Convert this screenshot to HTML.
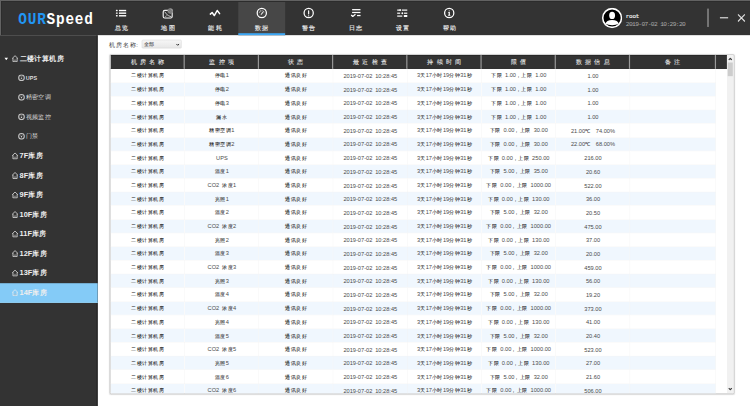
<!DOCTYPE html>
<html><head><meta charset="utf-8">
<style>
*{margin:0;padding:0;box-sizing:border-box}
html,body{width:750px;height:406px;overflow:hidden;background:#fff}
body{font-family:"Liberation Sans",sans-serif;position:relative}
#s{position:absolute;left:0;top:0;width:1920px;height:1040px;transform:scale(0.390625);transform-origin:0 0;background:#fff;overflow:hidden}
#hdr{position:absolute;left:0;top:0;width:1920px;height:90px;background:#333}
#logo{position:absolute;left:47px;top:27px;font-family:"Liberation Mono",monospace;font-size:40px;line-height:48px;color:#fff;font-weight:bold;letter-spacing:2.2px;transform:scaleX(0.92);transform-origin:0 0}
#logo b{color:#2196f3;-webkit-text-stroke:0px}
.nav{position:absolute;top:0;width:120px;height:90px;color:#eee;text-align:center}
.nav.act{background:#474747}
.nav.act:after{content:"";position:absolute;left:0;right:0;bottom:0;height:5px;background:#3da8f5}
.nav svg{position:absolute;left:44px;top:16px;width:32px;height:32px}
.nav span{position:absolute;left:0;right:0;top:64px;font-size:15px;line-height:18px;letter-spacing:3.5px;text-indent:3.5px;-webkit-text-stroke:0.35px #eee}
#side{position:absolute;left:0;top:90px;width:250px;height:950px;background:#333;box-shadow:inset -3px 0 0 #262626}
.si{position:absolute;left:0;width:250px;height:50px;color:#eee}
.si.act{background:#84cbf7;box-shadow:inset 0 -2px 0 #98d8fb}
.si .t{position:absolute;top:15px;font-size:19px;line-height:21px;font-weight:bold}
.si .sub{position:absolute;left:66px;top:15px;font-size:16px;line-height:18px;color:#ddd}
#content{position:absolute;left:250px;top:90px;width:1670px;height:950px;background:#fff}
#lbl{position:absolute;left:280px;top:106px;font-size:15px;line-height:18px;color:#3a3a3a;letter-spacing:2.2px}
#sel{position:absolute;left:363px;top:102px;width:102px;height:22px;border:1px solid #c8c8c8;border-radius:3px;background:linear-gradient(#f6f6f6,#e6e6e6);font-size:14px;line-height:20px;padding-left:4px;color:#111}
#grid{position:absolute;left:281px;top:139px;width:1599px;height:870px;border:2px solid #c2c2c2;border-radius:4px;overflow:hidden;background:#fff;box-shadow:0 1px 3px rgba(0,0,0,.12)}
#gh{position:absolute;left:0;top:0;height:35px;width:1578px;background:#333;border-top:2px solid #222;border-bottom:2px solid #222}
#gh div{position:absolute;top:0;height:31px;line-height:31px;text-align:center;color:#e8e8e8;font-size:15px;letter-spacing:8.8px;text-indent:8.8px;-webkit-text-stroke:0.2px #eee}
#gh i{position:absolute;top:-2px;width:3px;height:35px;background:#9a9a9a}
#gb{position:absolute;left:0;top:35px;width:1580px}
table{border-collapse:collapse;table-layout:fixed}
td{height:35px;padding:2px 0 0 2px;text-align:center;font-size:13.5px;color:#1a1a1a;-webkit-text-stroke:0.15px #1a1a1a;border-right:1px solid #f2f2f2;border-bottom:1px solid #f4f4f4;white-space:nowrap;overflow:hidden}
tr.alt td{background:#f0f7fe}
td .a{font-family:"Liberation Sans",sans-serif;font-size:14.5px;letter-spacing:0px;-webkit-text-stroke:0;color:#4a4a4a}
#sb{position:absolute;left:1578px;top:0;width:17px;height:865px;background:#f1f1f1}
#thumb{position:absolute;left:2px;top:19px;width:13px;height:35px;background:#cdcdcd}
</style></head><body>
<div id="s">
 <div id="hdr">
  <div id="logo"><b>OUR</b>Speed</div>
  <div class="nav" style="left:250px"><svg viewBox="0 0 32 32"><g fill="#fff"><rect x="2.7" y="9.2" width="4.6" height="3.6" rx="1"/><rect x="10.6" y="9.2" width="18.4" height="3.6"/><rect x="2.7" y="15.9" width="4.6" height="3.6" rx="1"/><rect x="10.6" y="15.9" width="18.4" height="3.6"/><rect x="2.7" y="22.6" width="4.6" height="3.6" rx="1"/><rect x="10.6" y="22.6" width="18.4" height="3.6"/></g></svg><span>总览</span></div>
  <div class="nav" style="left:370px"><svg viewBox="0 0 32 32"><rect x="3.8" y="10.6" width="23" height="19.8" rx="4" fill="none" stroke="#eee" stroke-width="3"/><circle cx="22" cy="12" r="7" fill="#999"/><path d="M17 7 L27 17 M16 10 L24 18 M19 6 L27 14 M15 13 L21 19" stroke="#444" stroke-width="1.2"/><path d="M7.5 14 L14 22 L18 24.5 L25 27" stroke="#ddd" stroke-width="2.2" fill="none"/><path d="M8 27 L13 24" stroke="#bbb" stroke-width="1.8"/></svg><span>地图</span></div>
  <div class="nav" style="left:490px"><svg viewBox="0 0 32 32"><path d="M4.4 20.1 L9 16 L14.6 23.9 L22 10.9 L28.2 18.8" stroke="#fff" stroke-width="3.8" fill="none" stroke-linejoin="round" stroke-linecap="round"/></svg><span>能耗</span></div>
  <div class="nav act" style="left:610px"><svg viewBox="0 0 32 32"><circle cx="16.2" cy="17.3" r="11.8" fill="none" stroke="#fff" stroke-width="3.2"/><path d="M9.8 16.5 A6.6 6.6 0 0 1 22.6 16.5" stroke="#c8c8c8" stroke-width="2.6" fill="none" stroke-dasharray="2.4 1.5"/><path d="M14.8 20.5 L18.8 15.5" stroke="#e0e0e0" stroke-width="3" stroke-linecap="round"/></svg><span>数据</span></div>
  <div class="nav" style="left:730px"><svg viewBox="0 0 32 32"><circle cx="16.2" cy="17.3" r="11.8" fill="none" stroke="#fff" stroke-width="3.2"/><rect x="14.6" y="10.5" width="3" height="10.5" rx="1.2" fill="#fff"/><circle cx="16.1" cy="24.6" r="1.6" fill="#fff"/></svg><span>警告</span></div>
  <div class="nav" style="left:850px"><svg viewBox="0 0 32 32"><g fill="#fff"><rect x="7.4" y="7.2" width="21.4" height="3.2"/><rect x="7.4" y="14.4" width="21.4" height="3.2"/><rect x="20" y="22.2" width="9" height="3.2"/></g><path d="M5 22.5 L9 26 L16 20.5" stroke="#fff" stroke-width="3.2" fill="none" stroke-linejoin="round"/></svg><span>日志</span></div>
  <div class="nav" style="left:970px"><svg viewBox="0 0 32 32"><g fill="#fff"><rect x="2.8" y="8.4" width="9" height="3"/><path d="M6.5 9.9 L12 7 L12 12.8Z"/><rect x="14.6" y="8.4" width="14" height="3"/><rect x="2.8" y="16.3" width="7.6" height="3"/><circle cx="15.9" cy="17.8" r="2.4"/><rect x="20.3" y="16.3" width="8.4" height="3"/><rect x="2.8" y="23.7" width="13" height="3"/><rect x="19.8" y="22.3" width="8.9" height="5.2" rx="1.5"/></g></svg><span>设置</span></div>
  <div class="nav" style="left:1090px"><svg viewBox="0 0 32 32"><circle cx="16" cy="17.3" r="11.8" fill="none" stroke="#fff" stroke-width="3.2"/><circle cx="16" cy="11.8" r="1.7" fill="#ccc"/><path d="M13.6 15 L17.6 15 L17.6 21 L19.5 24 L12.5 24 L14.5 21 L14.5 17 L13.6 17Z" fill="#fff"/></svg><span>帮助</span></div>
  <svg style="position:absolute;left:1541px;top:20px" width="52" height="52" viewBox="0 0 52 52"><circle cx="26" cy="26" r="24" fill="#000" stroke="#fff" stroke-width="4"/><ellipse cx="26" cy="19.5" rx="7.5" ry="9.3" fill="#fff"/><path d="M9 41 Q11 31 26 31 Q41 31 43 41 Q36 44.5 26 44.5 Q16 44.5 9 41Z" fill="#fff"/></svg>
  <div style="position:absolute;left:1602px;top:35px;font-family:'Liberation Mono',monospace;font-size:15px;color:#e8e8e8;-webkit-text-stroke:0.5px #e8e8e8;letter-spacing:-0.5px">root</div>
  <div style="position:absolute;left:1602px;top:54px;font-family:'Liberation Mono',monospace;font-size:16px;letter-spacing:-1.6px;color:#a8a8a8">2019-07-02 10:29:20</div>
  <div style="position:absolute;left:1810px;top:22px;width:5px;height:47px;background:#777"></div>
  <div style="position:absolute;left:1843px;top:44px;width:21px;height:3px;background:#ddd"></div>
  <svg style="position:absolute;left:1888px;top:36px" width="20" height="20" viewBox="0 0 20 20"><path d="M1 1 L19 19 M19 1 L1 19" stroke="#ddd" stroke-width="3"/></svg>
 </div>
 <div id="side">
  <div class="si" style="top:35px"><svg style="position:absolute;left:11px;top:22px" width="10" height="7" viewBox="0 0 10 7"><path d="M0 0 L10 0 L5 7Z" fill="#fff"/></svg><svg style="position:absolute;left:30px;top:16px" width="17" height="18" viewBox="0 0 17 18"><path d="M1.2 8.6 L8.5 1.6 L15.8 8.6 M3.2 7.5 V16.9 H13.8 V7.5" stroke="#eee" stroke-width="1.9" fill="none" stroke-linejoin="round"/><path d="M6.8 16.5 V12.5 Q8.5 9.5 10.2 12.5 V16.5" stroke="#bbb" stroke-width="1.3" fill="none"/></svg><span class="t" style="left:50px">二楼计算机房</span></div>
  <div class="si" style="top:85px"><svg class="ci" style="position:absolute;left:46px;top:15px" width="18" height="18" viewBox="0 0 18 18"><circle cx="9" cy="9" r="7.2" fill="none" stroke="#c4c4c4" stroke-width="2.8"/><path d="M5 8 A4.5 4.5 0 0 1 13 8" stroke="#888" stroke-width="1.5" fill="none"/><circle cx="9" cy="10" r="1.8" fill="#ddd"/></svg><span class="sub" style="font-size:14px;top:16px;font-weight:bold">UPS</span></div>
  <div class="si" style="top:135px"><svg style="position:absolute;left:46px;top:15px" width="18" height="18" viewBox="0 0 18 18"><circle cx="9" cy="9" r="7.2" fill="none" stroke="#c4c4c4" stroke-width="2.8"/><path d="M5 8 A4.5 4.5 0 0 1 13 8" stroke="#888" stroke-width="1.5" fill="none"/><circle cx="9" cy="10" r="1.8" fill="#ddd"/></svg><span class="sub">精密空调</span></div>
  <div class="si" style="top:185px"><svg style="position:absolute;left:46px;top:15px" width="18" height="18" viewBox="0 0 18 18"><circle cx="9" cy="9" r="7.2" fill="none" stroke="#c4c4c4" stroke-width="2.8"/><path d="M5 8 A4.5 4.5 0 0 1 13 8" stroke="#888" stroke-width="1.5" fill="none"/><circle cx="9" cy="10" r="1.8" fill="#ddd"/></svg><span class="sub">视频监控</span></div>
  <div class="si" style="top:235px"><svg style="position:absolute;left:46px;top:15px" width="18" height="18" viewBox="0 0 18 18"><circle cx="9" cy="9" r="7.2" fill="none" stroke="#c4c4c4" stroke-width="2.8"/><path d="M5 8 A4.5 4.5 0 0 1 13 8" stroke="#888" stroke-width="1.5" fill="none"/><circle cx="9" cy="10" r="1.8" fill="#ddd"/></svg><span class="sub">门禁</span></div>
  <div class="si" style="top:285px"><svg style="position:absolute;left:30px;top:15px" width="17" height="18" viewBox="0 0 17 18"><path d="M1.2 8.6 L8.5 1.6 L15.8 8.6 M3.2 7.5 V16.9 H13.8 V7.5" stroke="#eee" stroke-width="1.9" fill="none" stroke-linejoin="round"/><path d="M6.8 16.5 V12.5 Q8.5 9.5 10.2 12.5 V16.5" stroke="#bbb" stroke-width="1.3" fill="none"/></svg><span class="t" style="left:50px;top:13px">7F库房</span></div>
  <div class="si" style="top:335px"><svg style="position:absolute;left:30px;top:15px" width="17" height="18" viewBox="0 0 17 18"><path d="M1.2 8.6 L8.5 1.6 L15.8 8.6 M3.2 7.5 V16.9 H13.8 V7.5" stroke="#eee" stroke-width="1.9" fill="none" stroke-linejoin="round"/><path d="M6.8 16.5 V12.5 Q8.5 9.5 10.2 12.5 V16.5" stroke="#bbb" stroke-width="1.3" fill="none"/></svg><span class="t" style="left:50px;top:13px">8F库房</span></div>
  <div class="si" style="top:385px"><svg style="position:absolute;left:30px;top:15px" width="17" height="18" viewBox="0 0 17 18"><path d="M1.2 8.6 L8.5 1.6 L15.8 8.6 M3.2 7.5 V16.9 H13.8 V7.5" stroke="#eee" stroke-width="1.9" fill="none" stroke-linejoin="round"/><path d="M6.8 16.5 V12.5 Q8.5 9.5 10.2 12.5 V16.5" stroke="#bbb" stroke-width="1.3" fill="none"/></svg><span class="t" style="left:50px;top:13px">9F库房</span></div>
  <div class="si" style="top:435px"><svg style="position:absolute;left:30px;top:15px" width="17" height="18" viewBox="0 0 17 18"><path d="M1.2 8.6 L8.5 1.6 L15.8 8.6 M3.2 7.5 V16.9 H13.8 V7.5" stroke="#eee" stroke-width="1.9" fill="none" stroke-linejoin="round"/><path d="M6.8 16.5 V12.5 Q8.5 9.5 10.2 12.5 V16.5" stroke="#bbb" stroke-width="1.3" fill="none"/></svg><span class="t" style="left:50px;top:13px">10F库房</span></div>
  <div class="si" style="top:485px"><svg style="position:absolute;left:30px;top:15px" width="17" height="18" viewBox="0 0 17 18"><path d="M1.2 8.6 L8.5 1.6 L15.8 8.6 M3.2 7.5 V16.9 H13.8 V7.5" stroke="#eee" stroke-width="1.9" fill="none" stroke-linejoin="round"/><path d="M6.8 16.5 V12.5 Q8.5 9.5 10.2 12.5 V16.5" stroke="#bbb" stroke-width="1.3" fill="none"/></svg><span class="t" style="left:50px;top:13px">11F库房</span></div>
  <div class="si" style="top:535px"><svg style="position:absolute;left:30px;top:15px" width="17" height="18" viewBox="0 0 17 18"><path d="M1.2 8.6 L8.5 1.6 L15.8 8.6 M3.2 7.5 V16.9 H13.8 V7.5" stroke="#eee" stroke-width="1.9" fill="none" stroke-linejoin="round"/><path d="M6.8 16.5 V12.5 Q8.5 9.5 10.2 12.5 V16.5" stroke="#bbb" stroke-width="1.3" fill="none"/></svg><span class="t" style="left:50px;top:13px">12F库房</span></div>
  <div class="si" style="top:585px"><svg style="position:absolute;left:30px;top:15px" width="17" height="18" viewBox="0 0 17 18"><path d="M1.2 8.6 L8.5 1.6 L15.8 8.6 M3.2 7.5 V16.9 H13.8 V7.5" stroke="#eee" stroke-width="1.9" fill="none" stroke-linejoin="round"/><path d="M6.8 16.5 V12.5 Q8.5 9.5 10.2 12.5 V16.5" stroke="#bbb" stroke-width="1.3" fill="none"/></svg><span class="t" style="left:50px;top:13px">13F库房</span></div>
  <div class="si act" style="top:635px"><svg style="position:absolute;left:30px;top:15px" width="17" height="18" viewBox="0 0 17 18"><path d="M1.2 8.6 L8.5 1.6 L15.8 8.6 M3.2 7.5 V16.9 H13.8 V7.5" stroke="#eee" stroke-width="1.9" fill="none" stroke-linejoin="round"/><path d="M6.8 16.5 V12.5 Q8.5 9.5 10.2 12.5 V16.5" stroke="#bbb" stroke-width="1.3" fill="none"/></svg><span class="t" style="left:50px;top:13px">14F库房</span></div>
 </div>
 <div id="lbl">机房名称:</div>
 <div id="sel">全部<svg style="position:absolute;right:4px;top:8px" width="10" height="7" viewBox="0 0 10 7"><path d="M1.5 1.5 L5 5 L8.5 1.5" stroke="#222" stroke-width="2.4" fill="none"/></svg></div>
 <div id="grid">
  <div id="gh">
   <div style="left:0px;width:189px">机房名称</div>
   <i style="left:187px"></i>
   <div style="left:189px;width:190px">监控项</div>
   <i style="left:377px"></i>
   <div style="left:379px;width:190px">状态</div>
   <i style="left:567px"></i>
   <div style="left:569px;width:190px">最近检查</div>
   <i style="left:757px"></i>
   <div style="left:759px;width:190px">持续时间</div>
   <i style="left:947px"></i>
   <div style="left:949px;width:190px">限值</div>
   <i style="left:1137px"></i>
   <div style="left:1139px;width:190px">数据信息</div>
   <i style="left:1327px"></i>
   <div style="left:1329px;width:220px">备注</div>
   <i style="left:1547px"></i>
  </div>
  <div id="gb"><table>
   <colgroup><col style="width:189px"><col style="width:190px"><col style="width:190px"><col style="width:190px"><col style="width:190px"><col style="width:190px"><col style="width:190px"><col style="width:220px"></colgroup>
<tr><td>二楼计算机房</td><td>停电<span class="a">1</span></td><td>通讯良好</td><td><span class="a">2019-07-02 10:28:45</span></td><td><span class="a">3</span>天<span class="a">17</span>小时<span class="a">19</span>分钟<span class="a">31</span>秒</td><td>下限<span class="a"> 1.00</span>，上限<span class="a"> 1.00</span></td><td><span class="a">1.00</span></td><td></td></tr>
<tr class="alt"><td>二楼计算机房</td><td>停电<span class="a">2</span></td><td>通讯良好</td><td><span class="a">2019-07-02 10:28:45</span></td><td><span class="a">3</span>天<span class="a">17</span>小时<span class="a">19</span>分钟<span class="a">31</span>秒</td><td>下限<span class="a"> 1.00</span>，上限<span class="a"> 1.00</span></td><td><span class="a">1.00</span></td><td></td></tr>
<tr><td>二楼计算机房</td><td>停电<span class="a">3</span></td><td>通讯良好</td><td><span class="a">2019-07-02 10:28:45</span></td><td><span class="a">3</span>天<span class="a">17</span>小时<span class="a">19</span>分钟<span class="a">31</span>秒</td><td>下限<span class="a"> 1.00</span>，上限<span class="a"> 1.00</span></td><td><span class="a">1.00</span></td><td></td></tr>
<tr class="alt"><td>二楼计算机房</td><td>漏水</td><td>通讯良好</td><td><span class="a">2019-07-02 10:28:45</span></td><td><span class="a">3</span>天<span class="a">17</span>小时<span class="a">19</span>分钟<span class="a">31</span>秒</td><td>下限<span class="a"> 1.00</span>，上限<span class="a"> 1.00</span></td><td><span class="a">1.00</span></td><td></td></tr>
<tr><td>二楼计算机房</td><td>精密空调<span class="a">1</span></td><td>通讯良好</td><td><span class="a">2019-07-02 10:28:45</span></td><td><span class="a">3</span>天<span class="a">17</span>小时<span class="a">19</span>分钟<span class="a">31</span>秒</td><td>下限<span class="a"> 0.00</span>，上限<span class="a"> 30.00</span></td><td><span class="a">21.00</span>℃<span class="a">  74.00%</span></td><td></td></tr>
<tr class="alt"><td>二楼计算机房</td><td>精密空调<span class="a">2</span></td><td>通讯良好</td><td><span class="a">2019-07-02 10:28:45</span></td><td><span class="a">3</span>天<span class="a">17</span>小时<span class="a">19</span>分钟<span class="a">31</span>秒</td><td>下限<span class="a"> 0.00</span>，上限<span class="a"> 30.00</span></td><td><span class="a">22.00</span>℃<span class="a">  68.00%</span></td><td></td></tr>
<tr><td>二楼计算机房</td><td><span class="a">UPS</span></td><td>通讯良好</td><td><span class="a">2019-07-02 10:28:45</span></td><td><span class="a">3</span>天<span class="a">17</span>小时<span class="a">19</span>分钟<span class="a">31</span>秒</td><td>下限<span class="a"> 0.00</span>，上限<span class="a"> 250.00</span></td><td><span class="a">216.00</span></td><td></td></tr>
<tr class="alt"><td>二楼计算机房</td><td>温度<span class="a">1</span></td><td>通讯良好</td><td><span class="a">2019-07-02 10:28:45</span></td><td><span class="a">3</span>天<span class="a">17</span>小时<span class="a">19</span>分钟<span class="a">31</span>秒</td><td>下限<span class="a"> 5.00</span>，上限<span class="a"> 35.00</span></td><td><span class="a">20.60</span></td><td></td></tr>
<tr><td>二楼计算机房</td><td><span class="a">CO2 </span>浓度<span class="a">1</span></td><td>通讯良好</td><td><span class="a">2019-07-02 10:28:45</span></td><td><span class="a">3</span>天<span class="a">17</span>小时<span class="a">19</span>分钟<span class="a">31</span>秒</td><td>下限<span class="a"> 0.00</span>，上限<span class="a"> 1000.00</span></td><td><span class="a">522.00</span></td><td></td></tr>
<tr class="alt"><td>二楼计算机房</td><td>光照<span class="a">1</span></td><td>通讯良好</td><td><span class="a">2019-07-02 10:28:45</span></td><td><span class="a">3</span>天<span class="a">17</span>小时<span class="a">19</span>分钟<span class="a">31</span>秒</td><td>下限<span class="a"> 0.00</span>，上限<span class="a"> 130.00</span></td><td><span class="a">36.00</span></td><td></td></tr>
<tr><td>二楼计算机房</td><td>温度<span class="a">2</span></td><td>通讯良好</td><td><span class="a">2019-07-02 10:28:45</span></td><td><span class="a">3</span>天<span class="a">17</span>小时<span class="a">19</span>分钟<span class="a">31</span>秒</td><td>下限<span class="a"> 5.00</span>，上限<span class="a"> 32.00</span></td><td><span class="a">20.50</span></td><td></td></tr>
<tr class="alt"><td>二楼计算机房</td><td><span class="a">CO2 </span>浓度<span class="a">2</span></td><td>通讯良好</td><td><span class="a">2019-07-02 10:28:45</span></td><td><span class="a">3</span>天<span class="a">17</span>小时<span class="a">19</span>分钟<span class="a">31</span>秒</td><td>下限<span class="a"> 0.00</span>，上限<span class="a"> 1000.00</span></td><td><span class="a">475.00</span></td><td></td></tr>
<tr><td>二楼计算机房</td><td>光照<span class="a">2</span></td><td>通讯良好</td><td><span class="a">2019-07-02 10:28:45</span></td><td><span class="a">3</span>天<span class="a">17</span>小时<span class="a">19</span>分钟<span class="a">31</span>秒</td><td>下限<span class="a"> 0.00</span>，上限<span class="a"> 130.00</span></td><td><span class="a">37.00</span></td><td></td></tr>
<tr class="alt"><td>二楼计算机房</td><td>温度<span class="a">3</span></td><td>通讯良好</td><td><span class="a">2019-07-02 10:28:45</span></td><td><span class="a">3</span>天<span class="a">17</span>小时<span class="a">19</span>分钟<span class="a">31</span>秒</td><td>下限<span class="a"> 5.00</span>，上限<span class="a"> 32.00</span></td><td><span class="a">20.00</span></td><td></td></tr>
<tr><td>二楼计算机房</td><td><span class="a">CO2 </span>浓度<span class="a">3</span></td><td>通讯良好</td><td><span class="a">2019-07-02 10:28:45</span></td><td><span class="a">3</span>天<span class="a">17</span>小时<span class="a">19</span>分钟<span class="a">31</span>秒</td><td>下限<span class="a"> 0.00</span>，上限<span class="a"> 1000.00</span></td><td><span class="a">459.00</span></td><td></td></tr>
<tr class="alt"><td>二楼计算机房</td><td>光照<span class="a">3</span></td><td>通讯良好</td><td><span class="a">2019-07-02 10:28:45</span></td><td><span class="a">3</span>天<span class="a">17</span>小时<span class="a">19</span>分钟<span class="a">31</span>秒</td><td>下限<span class="a"> 0.00</span>，上限<span class="a"> 130.00</span></td><td><span class="a">56.00</span></td><td></td></tr>
<tr><td>二楼计算机房</td><td>温度<span class="a">4</span></td><td>通讯良好</td><td><span class="a">2019-07-02 10:28:45</span></td><td><span class="a">3</span>天<span class="a">17</span>小时<span class="a">19</span>分钟<span class="a">31</span>秒</td><td>下限<span class="a"> 5.00</span>，上限<span class="a"> 32.00</span></td><td><span class="a">19.20</span></td><td></td></tr>
<tr class="alt"><td>二楼计算机房</td><td><span class="a">CO2 </span>浓度<span class="a">4</span></td><td>通讯良好</td><td><span class="a">2019-07-02 10:28:45</span></td><td><span class="a">3</span>天<span class="a">17</span>小时<span class="a">19</span>分钟<span class="a">31</span>秒</td><td>下限<span class="a"> 0.00</span>，上限<span class="a"> 1000.00</span></td><td><span class="a">373.00</span></td><td></td></tr>
<tr><td>二楼计算机房</td><td>光照<span class="a">4</span></td><td>通讯良好</td><td><span class="a">2019-07-02 10:28:45</span></td><td><span class="a">3</span>天<span class="a">17</span>小时<span class="a">19</span>分钟<span class="a">31</span>秒</td><td>下限<span class="a"> 0.00</span>，上限<span class="a"> 130.00</span></td><td><span class="a">41.00</span></td><td></td></tr>
<tr class="alt"><td>二楼计算机房</td><td>温度<span class="a">5</span></td><td>通讯良好</td><td><span class="a">2019-07-02 10:28:45</span></td><td><span class="a">3</span>天<span class="a">17</span>小时<span class="a">19</span>分钟<span class="a">31</span>秒</td><td>下限<span class="a"> 5.00</span>，上限<span class="a"> 32.00</span></td><td><span class="a">20.40</span></td><td></td></tr>
<tr><td>二楼计算机房</td><td><span class="a">CO2 </span>浓度<span class="a">5</span></td><td>通讯良好</td><td><span class="a">2019-07-02 10:28:45</span></td><td><span class="a">3</span>天<span class="a">17</span>小时<span class="a">19</span>分钟<span class="a">31</span>秒</td><td>下限<span class="a"> 0.00</span>，上限<span class="a"> 1000.00</span></td><td><span class="a">523.00</span></td><td></td></tr>
<tr class="alt"><td>二楼计算机房</td><td>光照<span class="a">5</span></td><td>通讯良好</td><td><span class="a">2019-07-02 10:28:45</span></td><td><span class="a">3</span>天<span class="a">17</span>小时<span class="a">19</span>分钟<span class="a">31</span>秒</td><td>下限<span class="a"> 0.00</span>，上限<span class="a"> 130.00</span></td><td><span class="a">27.00</span></td><td></td></tr>
<tr><td>二楼计算机房</td><td>温度<span class="a">6</span></td><td>通讯良好</td><td><span class="a">2019-07-02 10:28:45</span></td><td><span class="a">3</span>天<span class="a">17</span>小时<span class="a">19</span>分钟<span class="a">31</span>秒</td><td>下限<span class="a"> 5.00</span>，上限<span class="a"> 32.00</span></td><td><span class="a">21.60</span></td><td></td></tr>
<tr class="alt"><td>二楼计算机房</td><td><span class="a">CO2 </span>浓度<span class="a">6</span></td><td>通讯良好</td><td><span class="a">2019-07-02 10:28:45</span></td><td><span class="a">3</span>天<span class="a">17</span>小时<span class="a">19</span>分钟<span class="a">31</span>秒</td><td>下限<span class="a"> 0.00</span>，上限<span class="a"> 1000.00</span></td><td><span class="a">506.00</span></td><td></td></tr>
  </table></div>
  <div id="sb"><svg style="position:absolute;left:3px;top:6px" width="11" height="8" viewBox="0 0 11 8"><path d="M1.5 6.5 L5.5 2.5 L9.5 6.5" stroke="#404040" stroke-width="3" fill="none"/></svg><div id="thumb"></div><svg style="position:absolute;left:3px;bottom:6px" width="11" height="8" viewBox="0 0 11 8"><path d="M1.5 1.5 L5.5 5.5 L9.5 1.5" stroke="#404040" stroke-width="3" fill="none"/></svg></div>
 </div>
</div>
<div style="position:absolute;left:0;top:0;width:750px;height:1px;background:#626262"></div><div style="position:absolute;left:0;top:0;width:1px;height:35px;background:#626262"></div><div style="position:absolute;left:1px;top:1px;width:749px;height:1px;background:#2c2c2c"></div><div style="position:absolute;left:1px;top:1px;width:1px;height:34px;background:#2c2c2c"></div>
</body></html>
